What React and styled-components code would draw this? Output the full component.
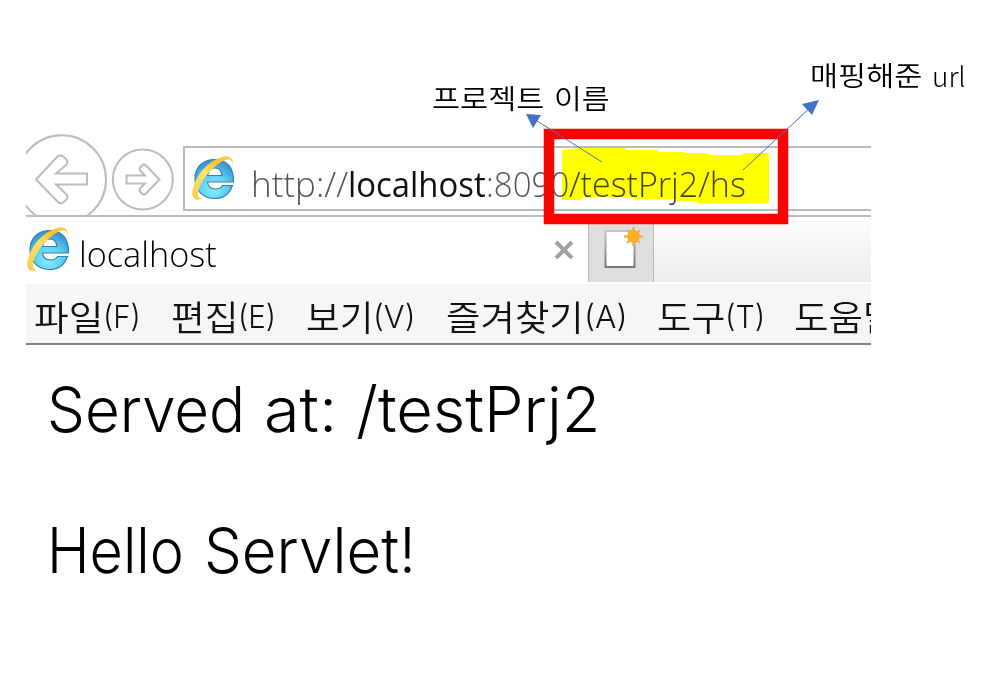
import React, { useLayoutEffect, useRef, useState } from "react";
import styled, { createGlobalStyle } from "styled-components";

const GlobalStyle = createGlobalStyle`
  body { margin: 0; background: #fff; overflow: hidden; }
`;

const uiFont = `"Open Sans", "Noto Sans CJK KR", sans-serif`;
const contentFont = `Inter, "Liberation Sans", sans-serif`;
const labelFont = `"Noto Sans CJK KR", sans-serif`;

const Page = styled.main`
  position: relative;
  box-sizing: border-box;
  width: 982px;
  height: 687px;
  padding: 134px 0 0 26px;
  background: #fff;
  overflow: hidden;
`;

const Browser = styled.section`
  width: 845px;
  overflow: hidden;
`;

const NavBar = styled.div`
  display: flex;
  box-sizing: border-box;
  height: 83px;
  border-bottom: 2px solid #bcbcbc;
`;

const NavIcons = styled.svg`
  flex: none;
  width: 157px;
  height: 81px;
  fill: none;
  stroke: #bcbcbc;
  stroke-width: 2;
`;

const AddressBox = styled.div`
  display: flex;
  align-items: flex-start;
  box-sizing: border-box;
  flex: 1;
  height: 65px;
  margin-top: 12px;
  border: 2px solid #bababa;
  border-right: 0;
`;

const IeIcon = styled.svg`
  flex: none;
  width: 44px;
  height: 46px;
  margin: ${(p) => p.$margin};
`;

const Url = styled.div`
  display: flex;
  margin: 12px 0 0 16px;
`;

const TabRow = styled.div`
  display: flex;
  height: 67px;
  box-sizing: border-box;
`;

const Tab = styled.div`
  display: flex;
  width: 562px;
  box-sizing: border-box;
`;

const TabTitle = styled.div`
  flex: 1;
  margin: 12px 0 0 9px;
`;

const CloseIcon = styled.svg`
  width: 20px;
  height: 20px;
  margin: 23px 14px 0 0;
  stroke: #a2a2a2;
  stroke-width: 4;
`;

const NewTab = styled.div`
  box-sizing: border-box;
  width: 66px;
  height: 65px;
  border: solid #b9b9b9;
  border-width: 0 1.5px;
  background: #dedede;
`;

const TabFill = styled.div`
  flex: 1;
  height: 65px;
  background: linear-gradient(#fff, #fcfcfc 10%, #ececec);
`;

const MenuBar = styled.nav`
  display: flex;
  box-sizing: border-box;
  height: 61px;
  padding: 7px 0 0 8px;
  background: #f6f6f6;
  border-bottom: 2px solid #828282;
  overflow: hidden;
`;

const MenuItem = styled.div`
  display: flex;
  flex: none;
  width: ${(p) => p.$w}px;
`;

const Content = styled.article`
  display: flex;
  flex-direction: column;
  gap: 61px;
  padding: 24px 0 0 21px;
`;

const Line = styled.p`
  display: flex;
  gap: ${(p) => p.$gap}px;
  margin: 0;
`;

const FitBox = styled.span`
  display: block;
  flex: none;
  width: ${(p) => p.$w}px;
  height: ${(p) => p.$lh}px;
  white-space: pre;
`;

const FitText = styled.span`
  display: inline-block;
  transform-origin: 0 0;
  font-family: ${(p) => p.$font || uiFont};
  font-size: ${(p) => p.$size}px;
  font-weight: ${(p) => p.$weight || 300};
  line-height: ${(p) => p.$lh}px;
  color: ${(p) => p.$color || "#111"};
`;

function Fit({ w, size, lh, font, weight, color, children }) {
  const ref = useRef(null);
  const [scale, setScale] = useState(1);
  useLayoutEffect(() => {
    setScale(w / ref.current.offsetWidth);
  }, [w]);
  return (
    <FitBox $w={w} $lh={lh}>
      <FitText
        ref={ref}
        $size={size}
        $lh={lh}
        $font={font}
        $weight={weight}
        $color={color}
        style={{ transform: `scaleX(${scale})` }}
      >
        {children}
      </FitText>
    </FitBox>
  );
}

const Overlay = styled.svg`
  position: absolute;
  left: 0;
  top: 0;
  width: 982px;
  height: 687px;
  mix-blend-mode: ${(p) => p.$blend || "normal"};
`;

const Label = styled.div`
  position: absolute;
  left: ${(p) => p.$x}px;
  top: ${(p) => p.$y}px;
  display: flex;
  gap: 10px;
`;

function Explorer({ margin, id }) {
  return (
    <IeIcon viewBox="0 0 44 46" $margin={margin}>
      <defs>
        <radialGradient id={`${id}b`} cx="48%" cy="75%" r="70%">
          <stop offset="0" stopColor="#86efff" />
          <stop offset=".6" stopColor="#58c8ee" />
          <stop offset="1" stopColor="#3a94d0" />
        </radialGradient>
        <linearGradient id={`${id}y`} x1="0" y1="1" x2="1" y2="0">
          <stop offset="0" stopColor="#fcc944" />
          <stop offset=".45" stopColor="#ffe070" />
          <stop offset=".75" stopColor="#fbc21e" />
          <stop offset="1" stopColor="#f8cf70" />
        </linearGradient>
      </defs>
      <path
        d="M42.5 27H16.5C17 31.500 20 34 24.500 34C28 34 30 33 31.500 30.500H41.500C38.500 38.500 32.500 43.500 24 43.500C12 43.500 4 35.500 4 24C4 12 12 4.500 24 4.500C36 4.500 43 13 42.500 27ZM16.500 20.500H31C30.500 15.500 28 13 24 13C20 13 17.500 15.500 16.500 20.500Z"
        fill={`url(#${id}b)`}
        stroke="#2f83b5"
        strokeWidth="1.200"
      />
      <path
        d="M41.500 10C43 4 39 .5 33 1.500C22 4 11 13 5.500 24C1 33 0 40 3 43.500C5 45.500 8 45 10.500 43.500C6 42.500 6 37 9.500 30C15 19 25 9 34 5C39 3.500 41 5 41.500 10Z"
        fill={`url(#${id}y)`}
      />
    </IeIcon>
  );
}

const MENU = [
  { name: "파일", key: "(F)", w: 137, nameW: 69, keyW: 38 },
  { name: "편집", key: "(E)", w: 135, nameW: 67, keyW: 38 },
  { name: "보기", key: "(V)", w: 140, nameW: 67, keyW: 42 },
  { name: "즐겨찾기", key: "(A)", w: 211, nameW: 138, keyW: 43 },
  { name: "도구", key: "(T)", w: 137, nameW: 68, keyW: 40 },
  { name: "도움말", w: 104, nameW: 104 },
];

export default function App() {
  return (
    <>
      <GlobalStyle />
      <Page>
        <Browser>
          <NavBar>
            <NavIcons viewBox="0 0 157 81">
              <circle cx="35.700" cy="45.500" r="44.300" />
              <path d="M10 45.500L31 23Q34 20 37 22.500L40 25Q43 28 40 31L30 39.500H61V50.500H30L40 60Q43 63 40 66L37 68.500Q34 70.500 31 67Z" />
              <circle cx="116.800" cy="45.500" r="30" />
              <path d="M133.500 45.500L120 31.500Q118 29.500 116 31.500L114.500 33Q112.500 35 114.500 37L119 41.500H100.500V49.500H119L114.500 54Q112.500 56 114.500 58L116 59.500Q118 61.500 120 59.500Z" />
            </NavIcons>
            <AddressBox>
              <Explorer id="a" margin="7px 0 0 6px" />
              <Url>
                <Fit w={97} size={35} lh={48} color="#555">http://</Fit>
                <Fit w={138} size={35} lh={48} weight={400}>localhost</Fit>
                <Fit w={83} size={35} lh={48} color="#555">:8090</Fit>
                <Fit w={177} size={35} lh={48} color="#444">/testPrj2/hs</Fit>
              </Url>
            </AddressBox>
          </NavBar>
          <TabRow>
            <Tab>
              <Explorer id="t" margin="9px 0 0 0" />
              <TabTitle>
                <Fit w={138} size={35} lh={50} weight={350} color="#000">localhost</Fit>
              </TabTitle>
              <CloseIcon viewBox="0 0 20 20">
                <path d="M2 2L18 18M18 2L2 18" />
              </CloseIcon>
            </Tab>
            <NewTab>
              <svg width="63" height="65" viewBox="0 0 63 65">
                <defs>
                  <linearGradient id="paper" x1="0" y1="0" x2="0" y2="1">
                    <stop offset="0" stopColor="#c4c4c4" />
                    <stop offset="1" stopColor="#777" />
                  </linearGradient>
                </defs>
                <path d="M16.500 14H45.500V50H16.500Z" fill="#fff" stroke="url(#paper)" strokeWidth="2" />
                <path
                  d="M44.500 10V29M35 19.500H54M38 13L51 26M51 13L38 26"
                  stroke="#f7b04c"
                  strokeWidth="2.400"
                />
                <circle cx="44.500" cy="19.500" r="5.800" fill="#ffb21a" stroke="#f5a12d" />
              </svg>
            </NewTab>
            <TabFill />
          </TabRow>
          <MenuBar>
            {MENU.map((m) => (
              <MenuItem key={m.name} $w={m.w}>
                <Fit w={m.nameW} size={35} lh={50} font={labelFont} weight={350}>{m.name}</Fit>
                {m.key && <Fit w={m.keyW} size={31} lh={52} font={contentFont}>{m.key}</Fit>}
              </MenuItem>
            ))}
          </MenuBar>
        </Browser>
        <Content>
          <Line $gap={19}>
            <Fit w={198} size={63} lh={80} font={contentFont} color="#000">Served</Fit>
            <Fit w={73} size={63} lh={80} font={contentFont} color="#000">at:</Fit>
            <Fit w={244} size={63} lh={80} font={contentFont} color="#000">/testPrj2</Fit>
          </Line>
          <Line $gap={20}>
            <Fit w={137} size={63} lh={80} font={contentFont} color="#000">Hello</Fit>
            <Fit w={212} size={63} lh={80} font={contentFont} color="#000">Servlet!</Fit>
          </Line>
        </Content>

        <Overlay viewBox="0 0 982 687" $blend="multiply">
          <path
            d="M562 150L580 148H625L626 150H658V152H684V153H705L712 155H742L744 153H769V203H697V201H676V199H635V198L600 197L583 198L580 200H562Z"
            fill="#ff0"
          />
        </Overlay>
        <Overlay viewBox="0 0 982 687">
          <rect x="549" y="134" width="234" height="85" fill="none" stroke="#f00" strokeWidth="10.500" />
          <path d="M602 162L534 119M743 170L812 106" stroke="#4472c4" strokeWidth="1" />
          <path d="M526 114L541 115L533 128ZM819 100L802 104L812 115Z" fill="#4472c4" />
        </Overlay>
        <Label $x={432} $y={78}>
          <Fit w={112} size={27} lh={40} font={labelFont} weight={350} color="#000">프로젝트</Fit>
          <Fit w={56} size={27} lh={40} font={labelFont} weight={350} color="#000">이름</Fit>
        </Label>
        <Label $x={810} $y={55}>
          <Fit w={112} size={27} lh={40} font={labelFont} weight={350} color="#000">매핑해준</Fit>
          <Fit w={34} size={27} lh={42} font={labelFont} weight={300} color="#000">url</Fit>
        </Label>
      </Page>
    </>
  );
}
